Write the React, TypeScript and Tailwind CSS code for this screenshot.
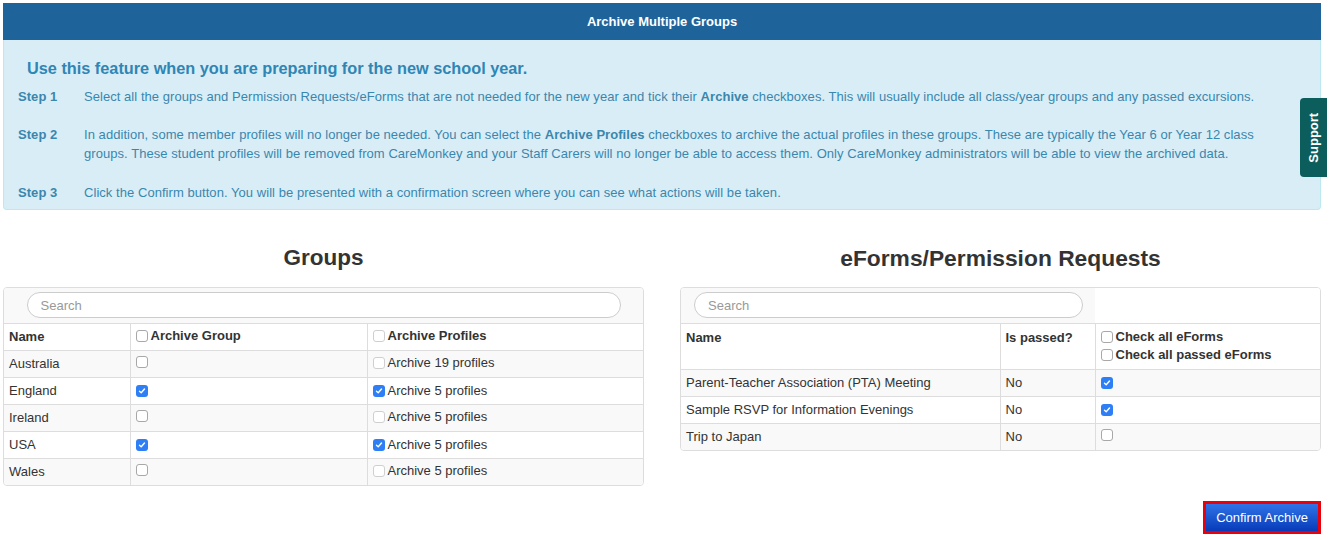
import React from "react";

function Box({ checked, light }: { checked?: boolean; light?: boolean }) {
  if (checked) {
    return (
      <span className="inline-flex items-center justify-center w-[12px] h-[12px] rounded-[3px] bg-[#2e7ff6] align-[-1px] shrink-0">
        <svg width="8" height="8" viewBox="0 0 8 8">
          <path d="M1.5 4.2 L3.2 5.8 L6.5 2" stroke="#fff" strokeWidth="1.4" fill="none" strokeLinecap="round" strokeLinejoin="round" />
        </svg>
      </span>
    );
  }
  return (
    <span
      className={
        "inline-block w-[12px] h-[12px] rounded-[3px] border bg-white align-[-1px] shrink-0 " +
        (light ? "border-[#cfcfcf]" : "border-[#a8a8a8]")
      }
    />
  );
}

const groups = [
  { name: "Australia", g: false, p: false, n: 19 },
  { name: "England", g: true, p: true, n: 5 },
  { name: "Ireland", g: false, p: false, n: 5 },
  { name: "USA", g: true, p: true, n: 5 },
  { name: "Wales", g: false, p: false, n: 5 },
];

const forms = [
  { name: "Parent-Teacher Association (PTA) Meeting", c: true },
  { name: "Sample RSVP for Information Evenings", c: true },
  { name: "Trip to Japan", c: false },
];

export default function App() {
  return (
    <div
      className="relative w-[1329px] h-[540px] bg-white text-[13px] text-[#333] overflow-hidden"
      style={{ fontFamily: '"Liberation Sans", Arial, sans-serif' }}
    >
      <div className="ml-[3px] mr-[8px] pt-[3px]">
        <div className="h-[37px] bg-[#1f639b] text-white font-bold text-[13px] flex items-center justify-center">
          Archive Multiple Groups
        </div>
        <div className="bg-[#d9edf7] border border-t-0 border-[#bce8f1] rounded-b-[4px] pl-[14px] pr-[10px] pt-[16px] pb-[8px] text-[#3a87ad] h-[170px] tracking-[0.05px]">
          <div className="ml-[9px] text-[16.3px] leading-[24px] font-bold text-[#2f86b4] tracking-normal">
            Use this feature when you are preparing for the new school year.
          </div>
          <div className="mt-[7px] flex leading-[19px]">
            <div className="w-[66px] font-bold shrink-0">Step 1</div>
            <div>
              Select all the groups and Permission Requests/eForms that are not needed for the new year and tick their <b>Archive</b> checkboxes. This will usually include all class/year groups and any passed excursions.
            </div>
          </div>
          <div className="mt-[19px] flex leading-[19px]">
            <div className="w-[66px] font-bold shrink-0">Step 2</div>
            <div>
              In addition, some member profiles will no longer be needed. You can select the <b>Archive Profiles</b> checkboxes to archive the actual profiles in these groups. These are typically the Year 6 or Year 12 class
              <br />
              groups. These student profiles will be removed from CareMonkey and your Staff Carers will no longer be able to access them. Only CareMonkey administrators will be able to view the archived data.
            </div>
          </div>
          <div className="mt-[20px] flex leading-[19px]">
            <div className="w-[66px] font-bold shrink-0">Step 3</div>
            <div>
              Click the Confirm button. You will be presented with a confirmation screen where you can see what actions will be taken.
            </div>
          </div>
        </div>

        <div className="flex items-start gap-[36px] mt-[36px]">
          <div className="w-[641px]">
            <div className="text-center text-[22.5px] leading-[24px] font-bold text-[#333] mb-[17px]">Groups</div>
            <div className="border border-[#ddd] rounded-[4px] overflow-hidden">
              <table className="w-full border-collapse table-fixed">
                <colgroup>
                  <col className="w-[126px]" />
                  <col className="w-[237px]" />
                  <col />
                </colgroup>
                <tbody>
                  <tr className="bg-[#f9f9f9]">
                    <td colSpan={3} className="h-[35px] p-0 align-middle">
                      <div className="mx-auto w-[594px] h-[26px] rounded-full border border-[#ccc] bg-white pl-[13px] flex items-center text-[#999] text-[13px]">
                        Search
                      </div>
                    </td>
                  </tr>
                  <tr className="bg-white">
                    <td className="h-[27px] px-[5px] border-t border-[#ddd] font-bold">Name</td>
                    <td className="px-[5px] border-t border-l border-[#ddd] font-bold">
                      <span className="inline-flex items-center gap-[3px]"><Box />Archive Group</span>
                    </td>
                    <td className="px-[5px] border-t border-l border-[#ddd] font-bold">
                      <span className="inline-flex items-center gap-[3px]"><Box light />Archive Profiles</span>
                    </td>
                  </tr>
                  {groups.map((r, i) => (
                    <tr key={r.name} className={i % 2 === 0 ? "bg-[#f9f9f9]" : "bg-white"}>
                      <td className="h-[27px] px-[5px] border-t border-[#ddd]">{r.name}</td>
                      <td className="px-[5px] border-t border-l border-[#ddd]">
                        <span className="inline-flex items-center"><Box checked={r.g} /></span>
                      </td>
                      <td className="px-[5px] border-t border-l border-[#ddd]">
                        <span className="inline-flex items-center gap-[3px]">
                          <Box checked={r.p} light />
                          Archive {r.n} profiles
                        </span>
                      </td>
                    </tr>
                  ))}
                </tbody>
              </table>
            </div>
          </div>

          <div className="w-[641px]">
            <div className="text-center text-[22.8px] leading-[24px] font-bold text-[#333] mb-[17px]">eForms/Permission Requests</div>
            <div className="border border-[#ddd] rounded-[4px] overflow-hidden">
              <table className="w-full border-collapse table-fixed">
                <colgroup>
                  <col className="w-[319px]" />
                  <col className="w-[95px]" />
                  <col />
                </colgroup>
                <tbody>
                  <tr>
                    <td colSpan={2} className="h-[35px] p-0 align-middle bg-[#f9f9f9]">
                      <div className="ml-[13px] w-[389px] h-[26px] rounded-full border border-[#ccc] bg-white pl-[13px] flex items-center text-[#999] text-[13px]">
                        Search
                      </div>
                    </td>
                    <td className="bg-white" />
                  </tr>
                  <tr className="bg-white">
                    <td className="h-[46px] px-[5px] pt-[4px] border-t border-[#ddd] font-bold align-top">Name</td>
                    <td className="px-[5px] pt-[4px] border-t border-l border-[#ddd] font-bold align-top">Is passed?</td>
                    <td className="px-[5px] pt-[4px] border-t border-l border-[#ddd] font-bold align-top leading-[18px]">
                      <div className="flex items-center gap-[3px]"><Box />Check all eForms</div>
                      <div className="flex items-center gap-[3px]"><Box />Check all passed eForms</div>
                    </td>
                  </tr>
                  {forms.map((r, i) => (
                    <tr key={r.name} className={i % 2 === 0 ? "bg-[#f9f9f9]" : "bg-white"}>
                      <td className="h-[27px] px-[5px] border-t border-[#ddd]">{r.name}</td>
                      <td className="px-[5px] border-t border-l border-[#ddd]">No</td>
                      <td className="px-[5px] border-t border-l border-[#ddd]">
                        <span className="inline-flex items-center"><Box checked={r.c} /></span>
                      </td>
                    </tr>
                  ))}
                </tbody>
              </table>
            </div>
          </div>
        </div>

        <div className="flex justify-end mt-[15px]">
          <button className="h-[33px] w-[118px] border-[3px] border-[#e8000b] bg-gradient-to-b from-[#2f73e8] to-[#0a3ab8] text-white text-[13px] flex items-center justify-center">
            Confirm Archive
          </button>
        </div>
      </div>

      <div className="absolute left-[1300px] top-[98px] w-[27px] h-[79px] bg-[#0b5e5c] rounded-l-[4px] flex items-center justify-center">
        <span className="text-white font-bold text-[13px] -rotate-90 whitespace-nowrap">Support</span>
      </div>
    </div>
  );
}
